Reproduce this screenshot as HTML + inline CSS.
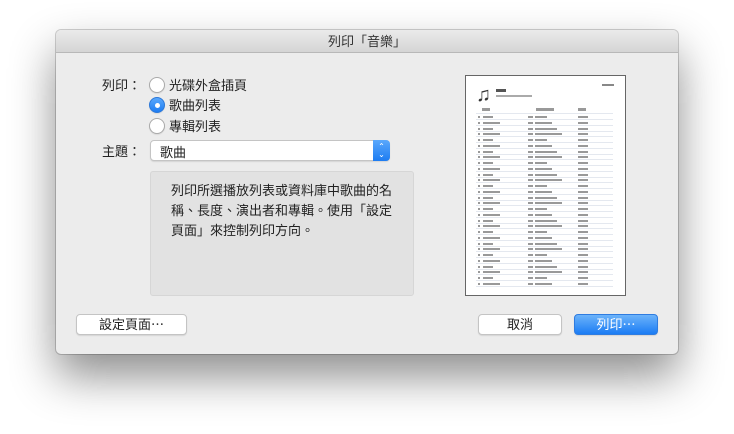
<!DOCTYPE html>
<html><head><meta charset="utf-8"><style>
*{box-sizing:border-box;margin:0;padding:0}
body{width:734px;height:434px;background:#fff;position:relative;overflow:hidden;font-family:"Liberation Sans","Noto Sans CJK TC",sans-serif;font-size:13px;color:#222}
.win{position:absolute;left:56px;top:30px;width:622px;height:324px;background:#ececec;border-radius:5px;box-shadow:0 22px 45px rgba(0,0,0,.45),0 0 0 1px rgba(0,0,0,.18)}
.title{height:23px;background:linear-gradient(#ebebeb,#d5d5d5);border-bottom:1px solid #b8b8b8;border-radius:5px 5px 0 0;text-align:center;line-height:23px;font-size:13px;color:#333}
.a{position:absolute}
.radio{position:absolute;width:16px;height:16px;border-radius:50%;background:#fff;border:1px solid #aaa;box-shadow:0 1px 1px rgba(0,0,0,.08)}
.radio.on{background:linear-gradient(#5aa8fc,#1d7cf2);border-color:#2b78d8}
.radio.on:after{content:"";position:absolute;left:5px;top:5px;width:5px;height:5px;border-radius:50%;background:#fff}
.btn{position:absolute;height:21px;background:#fff;border:1px solid #c4c4c4;border-radius:4px;text-align:center;line-height:19px;font-size:13px;box-shadow:0 1px 1px rgba(0,0,0,.1)}
.paper{position:absolute;left:465px;top:75px;width:161px;height:221px;background:#fff;border:1px solid #666}
.row{position:absolute;left:10px;width:137px;height:8px;border-bottom:1px solid #e4e8ef}
.row i{position:absolute;top:2px;height:3px;background:#999}
</style></head><body>
<div class="win"><div class="title">列印「音樂」</div></div>
<div class="a" style="left:102px;top:75px">列印：</div>
<div class="radio" style="left:149px;top:77px"></div><div class="a" style="left:169px;top:75px">光碟外盒插頁</div>
<div class="radio on" style="left:149px;top:97px"></div><div class="a" style="left:169px;top:95px">歌曲列表</div>
<div class="radio" style="left:149px;top:118px"></div><div class="a" style="left:169px;top:116px">專輯列表</div>
<div class="a" style="left:102px;top:141px">主題：</div>
<div class="a" style="left:150px;top:140px;width:240px;height:21px;background:#fff;border:1px solid #c4c4c4;border-radius:4px;box-shadow:0 1px 1px rgba(0,0,0,.1)"><span style="position:absolute;left:9px;top:1px">歌曲</span><div style="position:absolute;right:-1px;top:-1px;width:17px;height:21px;background:linear-gradient(#5aa8fc,#1d7cf2);border-radius:0 4px 4px 0;color:#fff;font-size:8px;line-height:8px;text-align:center;padding-top:3px">⌃<br>⌄</div></div>
<div class="a" style="left:150px;top:171px;width:264px;height:125px;background:#e2e2e2;border:1px solid #d6d6d6;border-radius:3px;padding:9px 10px 0 20px;line-height:20px;font-size:13px">列印所選播放列表或資料庫中歌曲的名稱、長度、演出者和專輯。使用「設定頁面」來控制列印方向。</div>
<div class="paper">
<div class="a" style="left:10px;top:8px;font-size:20px;color:#333">♫</div>
<div class="a" style="left:30px;top:13px;width:10px;height:3px;background:#555"></div>
<div class="a" style="left:30px;top:19px;width:36px;height:2px;background:#aaa"></div>
<div class="a" style="left:136px;top:8px;width:12px;height:2px;background:#888"></div>
<div class="row" style="top:30px"><i style="left:6px;width:8px"></i><i style="left:60px;width:18px"></i><i style="left:102px;width:8px"></i></div>
<div id="rows"></div>
</div>
<script>
var h='';for(var k=0;k<30;k++){var y=38+k*5.75;h+='<div class="row" style="top:'+y+'px;height:6px"><i style="left:2px;width:2px;top:2px;height:2px;background:#999"></i><i style="left:7px;width:'+(10+(k*7)%14)+'px;top:2px;height:2px;background:#999"></i><i style="left:52px;width:5px;top:2px;height:2px;background:#999"></i><i style="left:59px;width:'+(12+(k*5)%20)+'px;top:2px;height:2px;background:#999"></i><i style="left:102px;width:10px;top:2px;height:2px;background:#999"></i></div>';}
document.getElementById('rows').innerHTML=h;
</script>
<div class="btn" style="left:76px;top:314px;width:111px">設定頁面⋯</div>
<div class="btn" style="left:478px;top:314px;width:84px">取消</div>
<div class="btn" style="left:574px;top:314px;width:84px;background:linear-gradient(#6cb3fa,#1b7cf4);border-color:#2f7ce0;color:#fff">列印⋯</div>
</body></html>
